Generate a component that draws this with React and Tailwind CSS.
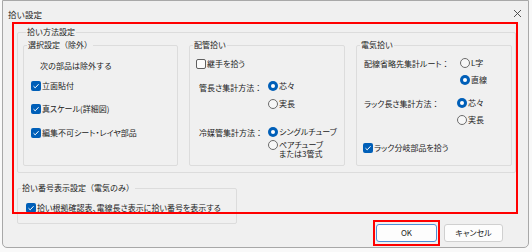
import React from "react";

const F = { fontFamily: '"Noto Sans CJK JP", "Noto Sans", sans-serif' };

function Check({ checked }) {
  if (checked) {
    return (
      <span className="w-[10px] h-[10px] rounded-[2px] bg-[#005fb8] flex items-center justify-center shrink-0">
        <svg width="8" height="8" viewBox="0 0 8 8">
          <path d="M1.5 4.2 L3.2 5.8 L6.6 2.2" stroke="#ffffff" strokeWidth="1" fill="none" />
        </svg>
      </span>
    );
  }
  return <span className="w-[10px] h-[10px] rounded-[2px] border border-[#5f5f5f] bg-[#fbfbfb] shrink-0" />;
}

function Radio({ checked }) {
  if (checked) {
    return (
      <span className="w-[10px] h-[10px] rounded-full bg-[#005fb8] flex items-center justify-center shrink-0">
        <span className="w-[4px] h-[4px] rounded-full bg-white" />
      </span>
    );
  }
  return <span className="block w-[10px] h-[10px] rounded-full border border-[#6b6b6b] bg-[#f7f7f7] shrink-0" />;
}

function Item({ ctl, children, cls = "" }) {
  return (
    <div className={"flex items-center h-[12px] gap-[1px] " + cls}>
      {ctl}
      <span className="leading-[12px] whitespace-nowrap [font-feature-settings:'palt']">{children}</span>
    </div>
  );
}

function Group({ title, cls, children }) {
  return (
    <fieldset className={"border border-[#dcdcdc] rounded-[2px] " + cls}>
      <legend className="ml-[3px] px-[1px] leading-[12px] whitespace-nowrap">{title}</legend>
      {children}
    </fieldset>
  );
}

function Label({ cls, text }) {
  return (
    <div className={"leading-[12px] whitespace-nowrap " + cls}>
      <span className="[font-feature-settings:'palt']">{text}</span>
      <span>：</span>
    </div>
  );
}

export default function App() {
  return (
    <div
      className="w-[532px] h-[252px] bg-[#f9f9f9] relative overflow-hidden text-[8px] text-[#1b1b1b]"
      style={F}
    >
      <div className="ml-[2px] w-[527px] h-[248px] bg-[#f0f0f0] border-x border-b border-t border-[#a8a8a8] rounded-b-[5px] flex flex-col">
        <div className="h-[25px] flex items-center justify-between pl-[5px] pr-[6px] shrink-0">
          <span className="text-[8.5px] leading-[12px]">拾い設定</span>
          <svg width="9" height="9" viewBox="0 0 9 9">
            <path d="M1 1 L8 8 M8 1 L1 8" stroke="#404040" strokeWidth="0.9" />
          </svg>
        </div>
        <div className="pl-[14px]">
          <Group title="拾い方法設定" cls="w-[499px] h-[147px] flex gap-[11px] pl-[5px]">
            <Group title="選択設定（除外）" cls="w-[155px] h-[127px] mt-[1px] flex flex-col">
              <div className="pl-[16px] mt-[9px] h-[12px] leading-[12px]">次の部品は除外する</div>
              <Item cls="pl-[7px] mt-[8px]" ctl={<Check checked />}>立面貼付</Item>
              <Item cls="pl-[7px] mt-[11px]" ctl={<Check checked />}>真スケール(詳細図)</Item>
              <Item cls="pl-[7px] mt-[12px]" ctl={<Check checked />}>編集不可シート・レイヤ部品</Item>
            </Group>
            <Group title="配管拾い" cls="w-[156px] h-[127px] mt-[1px] flex flex-col">
              <Item cls="pl-[6px] mt-[7px]" ctl={<Check />}>継手を拾う</Item>
              <div className="flex mt-[10px]">
                <Label cls="pl-[9px] w-[78px] mt-[2px]" text="管長さ集計方法" />
                <div className="flex flex-col gap-[6px]">
                  <Item ctl={<Radio checked />}>芯々</Item>
                  <Item ctl={<Radio />}>実長</Item>
                </div>
              </div>
              <div className="flex mt-[16px]">
                <Label cls="pl-[9px] w-[78px] mt-[1px]" text="冷媒管集計方法" />
                <div className="flex flex-col gap-[2px]">
                  <Item ctl={<Radio checked />}>シングルチューブ</Item>
                  <div className="flex items-start gap-[1px]">
                    <Radio />
                    <span className="leading-[9px] whitespace-nowrap [font-feature-settings:'palt']">
                      ペアチューブ
                      <br />
                      または3管式
                    </span>
                  </div>
                </div>
              </div>
            </Group>
            <Group title="電気拾い" cls="w-[156px] h-[127px] mt-[1px] flex flex-col">
              <div className="flex mt-[6px]">
                <Label cls="pl-[7px] w-[103px] mt-[1px]" text="配線省略先集計ルート" />
                <div className="flex flex-col gap-[5px]">
                  <Item ctl={<Radio />}>L字</Item>
                  <Item ctl={<Radio checked />}>直線</Item>
                </div>
              </div>
              <div className="flex mt-[11px]">
                <Label cls="pl-[7px] w-[100px] mt-[1px]" text="ラック長さ集計方法" />
                <div className="flex flex-col gap-[5px]">
                  <Item ctl={<Radio checked />}>芯々</Item>
                  <Item ctl={<Radio />}>実長</Item>
                </div>
              </div>
              <Item cls="pl-[6px] mt-[16px]" ctl={<Check checked />}>ラック分岐部品を拾う</Item>
            </Group>
          </Group>
          <div className="flex items-start mt-[9px]">
            <Group title="拾い番号表示設定（電気のみ）" cls="w-[220px] h-[42px] flex flex-col">
              <Item cls="pl-[8px] mt-[8px]" ctl={<Check checked />}>拾い根拠確認表、電線長さ表示に拾い番号を表示する</Item>
            </Group>
            <div className="flex gap-[7px] ml-[139px] mt-[42px]">
              <button className="w-[61px] h-[18px] rounded-[3px] border border-[#4f8fd6] bg-[#fdfdfd] flex items-center justify-center leading-[12px]">
                OK
              </button>
              <button className="w-[59px] h-[18px] rounded-[3px] border border-[#d0d0d0] bg-[#fdfdfd] flex items-center justify-center leading-[12px] [font-feature-settings:'palt']">
                キャンセル
              </button>
            </div>
          </div>
        </div>
      </div>
      <div className="absolute left-[12px] top-[22px] w-[506px] h-[192px] border-2 border-[#ff0000] pointer-events-none" />
      <div className="absolute left-[373px] top-[220px] w-[67px] h-[26px] border-2 border-[#ff0000] pointer-events-none" />
    </div>
  );
}
